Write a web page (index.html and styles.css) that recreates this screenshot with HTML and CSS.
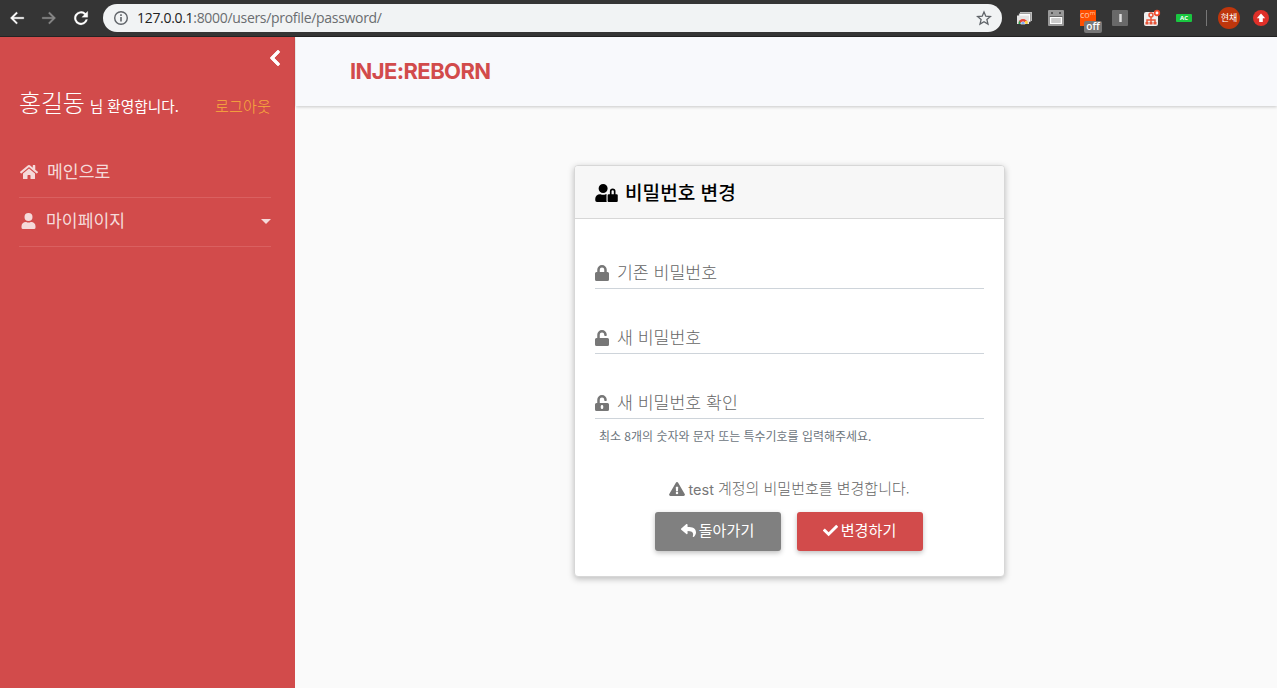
FILE: index.html
```html
<!DOCTYPE html>
<html lang="ko">
<head>
<meta charset="utf-8">
<title>INJE:REBORN</title>
<link rel="stylesheet" href="styles.css">
</head>
<body>
<div class="browser">
  <svg class="nav-icon" viewBox="0 0 24 24"><path d="M21 11H7.3l5.4-5.4L11.3 4 3.200 12l8.100 8 1.400-1.500L7.300 13H21z" stroke="currentColor" stroke-width=".5"/></svg>
  <svg class="nav-icon dim" viewBox="0 0 24 24"><path d="M3 11h13.700l-5.400-5.400L12.700 4l8.100 8-8.100 8-1.400-1.500 5.400-5.500H3z" stroke="currentColor" stroke-width=".5"/></svg>
  <svg class="nav-icon" viewBox="0 0 24 24"><path d="M18.300 5.700A9 9 0 1 0 20.800 14h-2.500A6.500 6.500 0 1 1 16.500 7.500L13 11h8V3z" stroke="currentColor" stroke-width=".3"/></svg>
  <div class="address">
    <svg class="info" viewBox="0 0 16 16"><circle cx="8" cy="8" r="6.300" fill="none" stroke="currentColor" stroke-width="1.400"/><path d="M7.200 7h1.600v4.500H7.200zM7.200 4.300h1.600v1.600H7.200z"/></svg>
    <span class="url">127.0.0.1<span class="path">:8000/users/profile/password/</span></span>
    <svg class="star" viewBox="0 0 16 16"><path d="M8 1.900l1.800 4.300 4.600.4-3.500 3 1.100 4.500L8 11.700l-4 2.400 1.100-4.500-3.500-3 4.600-.4z" fill="none" stroke="currentColor" stroke-width="1.300"/></svg>
  </div>
  <div class="extensions">
    <svg viewBox="0 0 24 24" class="ext"><path d="M8 6h12v9H8z" fill="#bbb"/><path d="M7 7.500h11.500V16H7z" fill="#fff" stroke="#777" stroke-width=".6"/><path d="M5 9.500h12V18H5z" fill="#e4e4e4"/><path d="M6.500 17.500a4.500 4.500 0 0 1 9 0z" fill="#e64435"/><path d="M7 14.500l2.500 3.500h-3z" fill="#28a755"/><path d="M13 15h2.500v3H13z" fill="#fdd23c"/><path d="M8.800 18a2.200 2.200 0 0 1 4.400 0z" fill="#4285f4" stroke="#fff" stroke-width=".7"/></svg>
    <svg viewBox="0 0 24 24" class="ext"><rect x="4" y="4" width="16" height="16" rx="1" fill="#999"/><path d="M7 7h2M15 7h2" stroke="#555" stroke-width="2"/><path d="M5.500 10.500h13" stroke="#666"/><path d="M6.600 11.500h10.800v6H6.600z" fill="#ccc" stroke="#fff" stroke-width="1.200"/></svg>
    <div class="ext com"><span class="co">co<sup>m</sup></span><span class="off">off</span></div>
    <svg viewBox="0 0 24 24" class="ext"><rect x="4" y="4" width="16" height="16" rx="1" fill="#696969"/><path d="M12.500 8v8" stroke="#ddd" stroke-width="2.500"/></svg>
    <svg viewBox="0 0 24 24" class="ext"><rect x="4" y="6" width="14" height="14" rx="2" fill="#eee"/><g fill="none" stroke="#e65439" stroke-width="1.500"><circle cx="11" cy="9" r="2"/><path d="M7 17v-3h8v3M11 11v6"/></g><path d="M5.500 16h3v2.500h-3zM9.500 16h3v2.500h-3zM13.500 16h3v2.500h-3z" fill="#e65439"/><circle cx="17" cy="7" r="2.300" fill="#fff" stroke="#f14a2b" stroke-width="1.700"/></svg>
    <div class="ext"><span class="ac">AC</span></div>
  </div>
  <i class="divider"></i>
  <span class="avatar">현채</span>
  <svg class="update" viewBox="0 0 16 16"><circle cx="8" cy="8" r="8" fill="#df3029"/><path d="M8 3.500l4.200 4.700H9.800v3.900H6.200V8.200H3.800z" fill="#fff"/></svg>
</div>
<div class="app">
  <aside class="sidebar">
    <svg class="collapse" viewBox="0 0 320 512"><path stroke="currentColor" stroke-width="24" d="M34.500 239L228.900 44.700c9.400-9.400 24.600-9.400 33.900 0l22.700 22.700c9.400 9.400 9.400 24.500 0 33.900L131.500 256l154 154.700c9.300 9.400 9.300 24.500 0 33.900l-22.700 22.700c-9.400 9.400-24.600 9.400-33.900 0L34.500 273c-9.300-9.400-9.300-24.600 0-34z"/></svg>
    <div class="welcome"><span class="name">홍길동</span><span class="greeting">님 환영합니다.</span><a class="logout">로그아웃</a></div>
    <nav class="menu">
      <a class="menu-item"><svg class="home" viewBox="0 0 576 512"><path d="M280.400 148.300L96 300.100V464a16 16 0 0 0 16 16l112-.3a16 16 0 0 0 16-16V368a16 16 0 0 1 16-16h64a16 16 0 0 1 16 16v96a16 16 0 0 0 16 16l112 .3a16 16 0 0 0 16-16V300L295.700 148.300a12 12 0 0 0-15.300 0zM571.600 251.500L488 182.600V44a12 12 0 0 0-12-12h-56a12 12 0 0 0-12 12v72.600L318.500 43a48 48 0 0 0-61 0L4.300 251.500a12 12 0 0 0-1.600 16.900l25.500 31a12 12 0 0 0 16.900 1.600L280.400 107.200a12 12 0 0 1 15.300 0L530.900 301a12 12 0 0 0 16.900-1.600l25.500-31a12 12 0 0 0-1.700-16.900z"/></svg><span>메인으로</span></a>
      <a class="menu-item"><svg class="user" viewBox="0 0 448 512"><path d="M224 256a128 128 0 1 0 0-256 128 128 0 0 0 0 256zm89.600 32h-16.700a174 174 0 0 1-145.800 0h-16.700A134.400 134.400 0 0 0 0 422.400V464a48 48 0 0 0 48 48h352a48 48 0 0 0 48-48v-41.600A134.400 134.400 0 0 0 313.600 288z"/></svg><span>마이페이지</span><i class="caret"></i></a>
    </nav>
  </aside>
  <main class="main">
    <header class="topbar"><span class="logo">INJE:REBORN</span></header>
    <section class="card">
      <h1 class="card-header"><svg class="user-lock" viewBox="0 0 640 512"><path d="M224 256a128 128 0 1 0 0-256 128 128 0 0 0 0 256zm96 64a63 63 0 0 1 8.100-30.500c-4.800-.5-9.500-1.500-14.500-1.500h-16.700a174 174 0 0 1-145.800 0h-16.700A134.400 134.400 0 0 0 0 422.400V464a48 48 0 0 0 48 48h280.900a63 63 0 0 1-8.900-32zm288-32h-32v-80a80 80 0 0 0-160 0v80h-32a32 32 0 0 0-32 32v160a32 32 0 0 0 32 32h224a32 32 0 0 0 32-32V320a32 32 0 0 0-32-32zm-80 0h-64v-80a32 32 0 0 1 64 0z"/></svg><span>비밀번호 변경</span></h1>
      <div class="card-body">
        <label class="field"><svg viewBox="0 0 448 512"><path d="M400 224h-24v-72a152 152 0 0 0-304 0v72H48a48 48 0 0 0-48 48v192a48 48 0 0 0 48 48h352a48 48 0 0 0 48-48V272a48 48 0 0 0-48-48zm-104 0H152v-72a72 72 0 0 1 144 0z"/></svg><span>기존 비밀번호</span></label>
        <label class="field"><svg viewBox="0 0 448 512"><path d="M400 256H152v-103.400a72 72 0 0 1 144-.9v16a24 24 0 0 0 24 24h32a24 24 0 0 0 24-24v-16A152 152 0 0 0 72 152.500V256H48a48 48 0 0 0-48 48v160a48 48 0 0 0 48 48h352a48 48 0 0 0 48-48V304a48 48 0 0 0-48-48z"/></svg><span>새 비밀번호</span></label>
        <label class="field"><svg viewBox="0 0 448 512"><path fill-rule="evenodd" d="M400 256H152v-103.400a72 72 0 0 1 144-.9v16a24 24 0 0 0 24 24h32a24 24 0 0 0 24-24v-16A152 152 0 0 0 72 152.500V256H48a48 48 0 0 0-48 48v160a48 48 0 0 0 48 48h352a48 48 0 0 0 48-48V304a48 48 0 0 0-48-48zM264 408a40 40 0 0 1-80 0v-48a40 40 0 0 1 80 0z"/></svg><span>새 비밀번호 확인</span></label>
        <p class="help">최소 8개의 숫자와 문자 또는 특수기호를 입력해주세요.</p>
        <p class="notice"><svg viewBox="0 0 576 512"><path fill-rule="evenodd" d="M569.500 440A48 48 0 0 1 528 512H48a48 48 0 0 1-41.600-72L246.400 24a48 48 0 0 1 83.200 0zM288 354a46 46 0 1 0 0 92 46 46 0 0 0 0-92zm-43.700-165.300l7.400 136a12 12 0 0 0 12 11.300h48.500a12 12 0 0 0 12-11.300l7.500-136a12 12 0 0 0-12-12.700h-63.500a12 12 0 0 0-11.900 12.700z"/></svg><span class="account">test</span><span class="message">계정의 비밀번호를 변경합니다.</span></p>
        <div class="actions">
          <button class="button back"><svg viewBox="0 0 512 512"><path d="M8.300 189.800L184.300 37.900C199.700 24.500 224 35.300 224 56v80.100c160.600 1.800 288 34 288 186.200 0 61.400-39.600 122.300-83.300 154.100-13.700 9.900-33.100-2.500-28.100-18.600C446 312.800 379.200 274.200 224 272v88c0 20.700-24.300 31.500-39.700 18.200l-176-152a24 24 0 0 1 0-36.400z"/></svg><span>돌아가기</span></button>
          <button class="button submit"><svg viewBox="0 0 512 512"><path d="M173.900 439.400L7.500 273a25.600 25.600 0 0 1 0-36.200l36.200-36.200a25.600 25.600 0 0 1 36.200 0l112.100 112L432.100 72.600a25.600 25.600 0 0 1 36.200 0l36.200 36.200a25.600 25.600 0 0 1 0 36.200L210.100 439.400a25.600 25.600 0 0 1-36.200 0z"/></svg><span>변경하기</span></button>
        </div>
      </div>
    </section>
  </main>
</div>
</body>
</html>
```

FILE: styles.css
```css
* { box-sizing: border-box; }
body { margin: 0; height: 688px; overflow: hidden; font-family: "Noto Sans CJK KR", sans-serif; color: #777; }
svg { display: block; flex: none; fill: currentColor; }
.browser { display: flex; align-items: center; height: 37px; padding: 0 8px 1px; background: #353535; border-bottom: 1px solid #242424; color: #fff; }
.nav-icon { width: 18px; height: 18px; margin-right: 14px; }
.dim { color: #898989; }
.address { display: flex; align-items: center; width: 899px; height: 28px; margin-left: -1px; padding: 0 10px; border-radius: 14px; background: #f1f3f4; color: #5f6368; }
.info { width: 16px; height: 16px; }
.url { margin-left: 8px; flex: 1; font: 14px/20px "Open Sans", sans-serif; letter-spacing: -.31px; color: #222; white-space: nowrap; }
.path { color: #6a6d70; }
.star { width: 16px; height: 16px; }
.extensions { display: flex; gap: 8px; margin-left: 10px; }
.ext { position: relative; width: 24px; height: 24px; }
.com::before { content: ""; display: block; width: 16px; height: 16px; margin: 4px; background: #ff4f00; }
.co { position: absolute; left: 4px; top: 5px; height: 8px; font: 9px/8px "Open Sans", sans-serif; color: #ffc3a6; }
.co sup { font-size: 6px; line-height: 1px; vertical-align: 3px; }
.off { position: absolute; left: 8px; top: 15px; width: 18px; height: 12px; border-radius: 2px; background: #777; font: 600 10px/11px "Open Sans", sans-serif; text-align: center; }
.ac { display: block; width: 16px; height: 8px; margin: 8px 4px; border-radius: 1px; background: #19c740; font: bold 6px/8px "Open Sans", sans-serif; text-align: center; }
.divider { width: 1px; height: 16px; margin-left: 10px; background: #777; }
.avatar { width: 22px; height: 22px; margin-left: 11px; border-radius: 50%; background: #bf360c; font-size: 9px; line-height: 21px; text-align: center; white-space: nowrap; }
.update { width: 16px; height: 16px; margin-left: 13px; }
.app { display: flex; height: 651px; }
.sidebar { width: 295px; padding: 12px 24px 0 20px; background: #d24b4b; color: #fff; }
.collapse { width: 14px; height: 18px; margin: 0 -11px 0 auto; }
.welcome { display: flex; align-items: baseline; height: 35px; margin-top: 17px; line-height: 35px; white-space: nowrap; }
.name { margin-left: -1px; font-size: 24px; letter-spacing: -.2px; font-weight: 300; }
.greeting { margin-left: 5px; font-size: 14.700px; }
.logout { margin-left: auto; font-size: 15.200px; color: #f9ad3c; font-weight: 300; }
.menu { margin-top: 29px; margin-left: -1px; }
.menu-item { display: flex; align-items: center; height: 49px; padding-left: 1px; border-bottom: 1px solid #da6060; color: #f5dada; font-size: 17.200px; }
.menu-item:first-child { height: 50px; }
.menu-item svg { margin-bottom: 2px; }
.menu-item span { margin: 0 0 4px 9px; }
.menu-item .user { width: 15px; height: 16px; margin-left: 1px; margin-bottom: 3px; }
.menu-item .user + span { margin-left: 10px; margin-bottom: 6px; }
.home { width: 18px; height: 16px; }
.caret { margin: 0 0 2px auto; border: 5px solid transparent; border-top-color: currentColor; border-bottom: 0; }
.main { flex: 1; background: #fafafa; }
.topbar { display: flex; align-items: center; height: 69px; margin-left: 1px; padding: 0 0 2px 54px; background: #f8f9fc; box-shadow: 0 1px 3px rgba(0,0,0,.2); }
.logo { font: 700 22px/30px Inter, sans-serif; letter-spacing: -.6px; color: #d24b4b; }
.card { width: 431px; height: 412px; margin: 59px 0 0 279px; border: 1px solid #d7d7d7; border-radius: 4px; background: #fff; box-shadow: 0 2px 6px rgba(0,0,0,.25); }
.card-header { display: flex; align-items: center; height: 53px; margin: 0; padding: 0 19px 0 20px; border-bottom: 1px solid #d7d7d7; border-radius: 3px 3px 0 0; background: #f7f7f7; color: #000; font-size: 19.100px; font-weight: 500; }
.user-lock { width: 23px; height: 18px; margin: 1px 7px 0 0; }
.card-body { padding: 34px 20px 0; }
.field { display: flex; align-items: center; height: 36px; margin-bottom: 29px; border-bottom: 1px solid #ced4da; font-size: 17.250px; font-weight: 300; white-space: nowrap; }
.field svg { width: 14px; height: 16px; margin: 4px 8px 0 0; }
.field span { margin-top: 2px; color: #666; }
.field:nth-child(3) { margin-bottom: 0; }
.help { margin: 8px 0 0 4px; font-size: 11.980px; line-height: 18px; color: #6c757d; white-space: nowrap; }
.notice { display: flex; align-items: center; justify-content: center; height: 24px; margin: 32px 0 0; font-size: 15px; font-weight: 300; white-space: nowrap; }
.notice svg { width: 16px; height: 14px; margin-right: 3px; }
.account { margin-right: 4px; font: 400 14.500px Inter, sans-serif; }
.message { margin-bottom: 4px; color: #666; }
.actions { display: flex; justify-content: center; gap: 16px; margin: 11px 2px 0 0; }
.button { display: flex; align-items: center; justify-content: center; width: 126px; height: 39px; padding: 0 0 2px; border: 0; border-radius: 3px; background: #808080; color: #fff; font: 15.100px "Noto Sans CJK KR", sans-serif; box-shadow: 0 2px 5px rgba(0,0,0,.25); }
.button svg { width: 15px; height: 15px; margin-right: 3px; }
.button span { margin-bottom: 4px; }
.submit { background: #d24b4b; }
```
